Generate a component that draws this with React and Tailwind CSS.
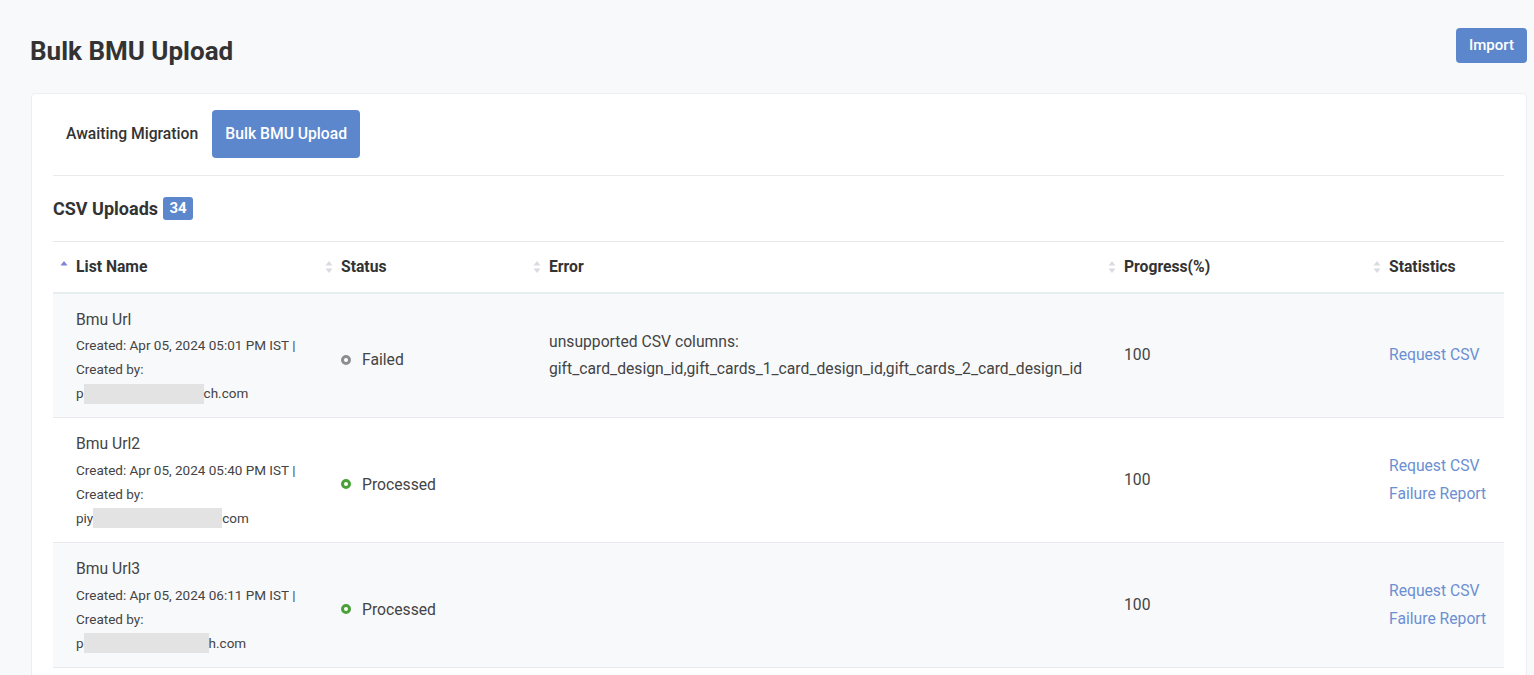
import React from "react";

const FONT = { fontFamily: "Roboto, 'Noto Sans', 'Liberation Sans', sans-serif" };

function SortIcon({ active }) {
  return (
    <svg width="8" height="16" viewBox="0 0 8 16" className="shrink-0">
      <path d="M4 2 L7.5 6.5 L0.5 6.5 Z" fill={active ? "#7d83d6" : "#d9dbe0"} />
      {!active && <path d="M4 14 L7.5 9.5 L0.5 9.5 Z" fill="#d9dbe0" />}
    </svg>
  );
}

function Th({ label, active }) {
  return (
    <th className="h-[51px] pl-[7px] text-left align-middle font-bold text-[15.7px] text-[#333]">
      <div className="flex items-center gap-[8px]">
        <SortIcon active={active} />
        <span>{label}</span>
      </div>
    </th>
  );
}

function Status({ kind }) {
  const color = kind === "Failed" ? "#8e8e8e" : "#4aa137";
  return (
    <div className="flex items-center gap-[11px] pt-[9px]">
      <span
        className="inline-block w-[10px] h-[10px] rounded-full border-[3px] bg-white"
        style={{ borderColor: color }}
      />
      <span className="text-[15.7px] text-[#444]">{kind}</span>
    </div>
  );
}

function Redacted({ pre, width, post }) {
  return (
    <div className="h-[24px] flex items-center text-[13.5px] text-[#444]">
      <span>{pre}</span>
      <span className="inline-block h-[20px] bg-[#e3e3e3]" style={{ width }} />
      <span>{post}</span>
    </div>
  );
}

const rows = [
  {
    name: "Bmu Url",
    created: "Created: Apr 05, 2024 05:01 PM IST |",
    pre: "p",
    w: 120,
    post: "ch.com",
    status: "Failed",
    error: ["unsupported CSV columns:", "gift_card_design_id,gift_cards_1_card_design_id,gift_cards_2_card_design_id"],
    links: ["Request CSV"],
    striped: true,
  },
  {
    name: "Bmu Url2",
    created: "Created: Apr 05, 2024 05:40 PM IST |",
    pre: "piy",
    w: 129,
    post: "com",
    status: "Processed",
    error: [],
    links: ["Request CSV", "Failure Report"],
    striped: false,
  },
  {
    name: "Bmu Url3",
    created: "Created: Apr 05, 2024 06:11 PM IST |",
    pre: "p",
    w: 125,
    post: "h.com",
    status: "Processed",
    error: [],
    links: ["Request CSV", "Failure Report"],
    striped: true,
  },
];

export default function App() {
  return (
    <div className="min-h-[675px] bg-[#f8f9fb] pl-[30px] pr-[7px] pt-[28px]" style={FONT}>
      <div className="flex items-start justify-between">
        <h1 className="pt-[7px] text-[26px] leading-[32px] font-bold text-[#333]">Bulk BMU Upload</h1>
        <button className="h-[35px] w-[71px] rounded-[4px] bg-[#5c87cc] text-[15px] font-medium text-white">
          Import
        </button>
      </div>

      <div className="mt-[26px] ml-[1px] rounded-[4px] border border-[#eceef2] bg-white pl-[21px] pr-[22px] pt-[16px] pb-[10px]">
        <div className="flex items-center gap-[14px] pb-[17px]">
          <span className="pl-[13px] text-[15.7px] font-medium text-[#333]">Awaiting Migration</span>
          <button className="h-[48px] w-[148px] rounded-[4px] bg-[#5c87cc] text-[15.7px] font-medium text-white">
            Bulk BMU Upload
          </button>
        </div>

        <div className="border-t border-[#e8eaee] pt-[19px] pb-[19px] flex items-center gap-[5px]">
          <span className="text-[18px] font-bold text-[#333]">CSV Uploads</span>
          <span className="inline-flex h-[23px] w-[30px] items-center justify-center rounded-[3px] bg-[#5c87cc] text-[15px] font-bold text-white">
            34
          </span>
        </div>

        <table className="w-full border-collapse table-fixed">
          <colgroup>
            <col className="w-[265px]" />
            <col className="w-[208px]" />
            <col className="w-[575px]" />
            <col className="w-[265px]" />
            <col />
          </colgroup>
          <thead>
            <tr className="border-t border-[#e6e8ec] border-b-2 border-b-[#e6eef0]">
              <Th label="List Name" active />
              <Th label="Status" />
              <Th label="Error" />
              <Th label="Progress(%)" />
              <Th label="Statistics" />
            </tr>
          </thead>
          <tbody>
            {rows.map((r) => (
              <tr
                key={r.name}
                className={`h-[125px] border-b border-[#e8eaee] ${r.striped ? "bg-[#f8f9fb]" : "bg-white"}`}
              >
                <td className="pl-[23px] align-top pt-[12px]">
                  <div className="h-[28px] flex items-center text-[15.7px] text-[#444]">{r.name}</div>
                  <div className="h-[24px] flex items-center text-[13.5px] text-[#444] whitespace-nowrap">{r.created}</div>
                  <div className="h-[24px] flex items-center text-[13.5px] text-[#444]">Created by:</div>
                  <Redacted pre={r.pre} width={r.w} post={r.post} />
                </td>
                <td className="pl-[23px] align-middle">
                  <Status kind={r.status} />
                </td>
                <td className="pl-[23px] align-middle text-[15.7px] text-[#444]">
                  {r.error.map((l) => (
                    <div key={l} className="h-[27px] flex items-center whitespace-nowrap">
                      {l}
                    </div>
                  ))}
                </td>
                <td className="pl-[23px] align-middle text-[15.7px] text-[#444]">100</td>
                <td className="pl-[23px] align-middle text-[15.7px] text-[#6b8fd2]">
                  {r.links.map((l) => (
                    <div key={l} className="h-[28px] flex items-center whitespace-nowrap">
                      {l}
                    </div>
                  ))}
                </td>
              </tr>
            ))}
          </tbody>
        </table>
      </div>
    </div>
  );
}
